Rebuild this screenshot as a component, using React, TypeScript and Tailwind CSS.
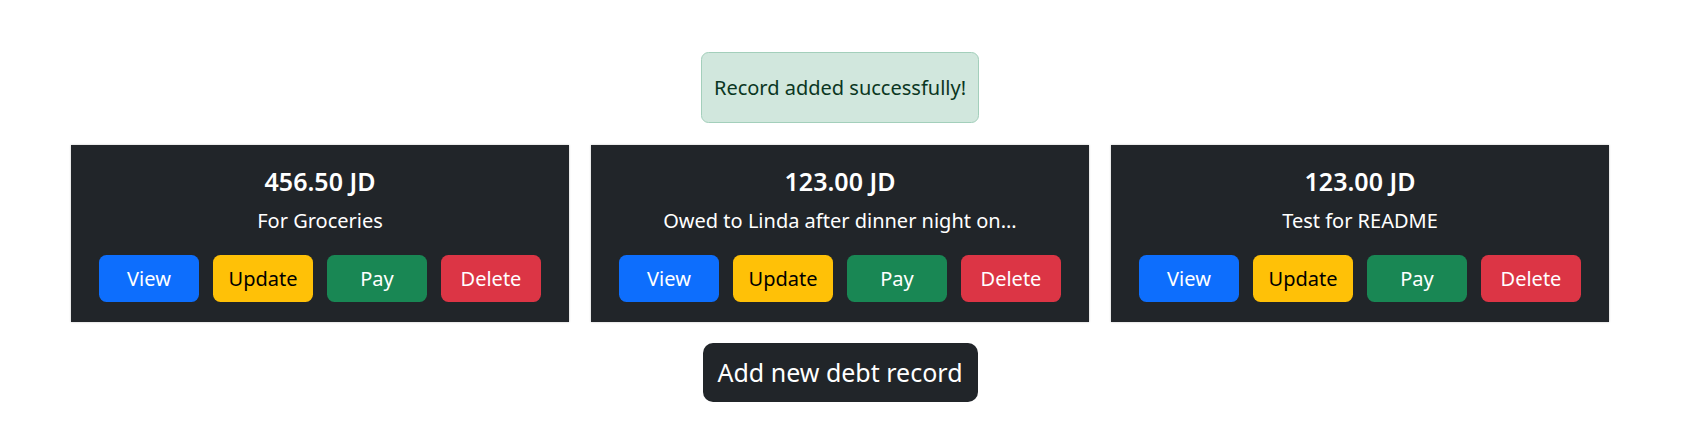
import React from "react";

type Debt = {
  id: number;
  amount: string;
  note: string;
};

const debts: Debt[] = [
  { id: 1, amount: "456.50 JD", note: "For Groceries" },
  { id: 2, amount: "123.00 JD", note: "Owed to Linda after dinner night on..." },
  { id: 3, amount: "123.00 JD", note: "Test for README" },
];

const actions = [
  { label: "View", cls: "bg-[#0d6efd] text-white" },
  { label: "Update", cls: "bg-[#ffc107] text-black" },
  { label: "Pay", cls: "bg-[#198754] text-white" },
  { label: "Delete", cls: "bg-[#dc3545] text-white" },
];

export default function App() {
  return (
    <div
      className="min-h-[430px] bg-white pt-[52px]"
      style={{ fontFamily: '"Segoe UI", "Noto Sans", "Open Sans", sans-serif' }}
    >
      <div className="ml-[71px] flex w-[1538px] flex-col items-center">
        <div className="flex h-[71px] w-[278px] items-center justify-center rounded-[7.5px] border border-[#a3cfbb] bg-[#d1e7dd] text-[20px] leading-[30px] text-[#0a3622]">
          Record added successfully!
        </div>

        <div className="mt-[22px] grid w-full grid-cols-3 gap-[22px]">
          {debts.map((debt) => (
            <div
              key={debt.id}
              className="flex h-[177px] flex-col items-center bg-[#212529] px-[20px] pt-[21px] text-white shadow-[0_0_2px_rgba(0,0,0,0.25)]"
            >
              <h5 className="text-[25px] font-semibold leading-[30px]">{debt.amount}</h5>
              <p className="mt-[10px] text-[20px] leading-[30px]">{debt.note}</p>
              <div className="mt-[19px] flex justify-center gap-[14px]">
                {actions.map((a) => (
                  <button
                    key={a.label}
                    type="button"
                    className={`h-[47px] w-[100px] rounded-[7.5px] text-[20px] leading-[30px] ${a.cls}`}
                  >
                    {a.label}
                  </button>
                ))}
              </div>
            </div>
          ))}
        </div>

        <button
          type="button"
          className="mt-[21px] h-[59px] w-[275px] rounded-[10px] bg-[#212529] text-[25px] leading-[37px] text-white"
        >
          Add new debt record
        </button>
      </div>
    </div>
  );
}
